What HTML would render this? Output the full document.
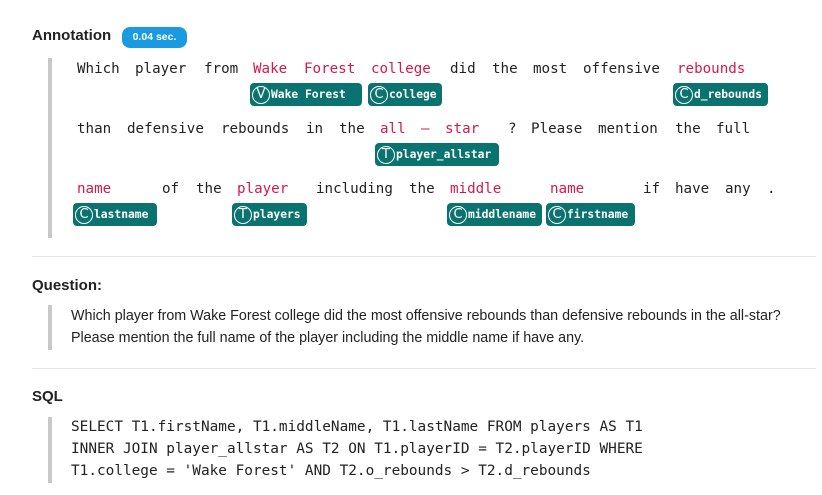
<!DOCTYPE html>
<html><head><meta charset="utf-8"><style>
body{margin:0;width:822px;height:495px;background:#fff;position:relative;overflow:hidden;font-family:"Liberation Sans",Arial,sans-serif;}
.a{position:absolute;}
.w{position:absolute;font-family:"DejaVu Sans Mono",monospace;font-size:14.2px;color:#222;line-height:20px;white-space:pre;}
.r{color:#d6194a;}
.t{position:absolute;height:23px;background:#0a7370;border-radius:4px;color:#fff;font-family:"DejaVu Sans Mono",monospace;font-weight:bold;font-size:11.3px;line-height:23px;padding-left:21px;box-sizing:border-box;white-space:pre;}
.t i{position:absolute;left:2px;top:2.5px;width:18px;height:18px;border:1.3px solid #fff;border-radius:50%;box-sizing:border-box;font-style:normal;font-family:"DejaVu Sans",sans-serif;font-weight:normal;font-size:13px;line-height:16px;text-align:center;}
.bar{position:absolute;left:48px;width:4px;background:#c8c8c8;}
.hr{position:absolute;left:32px;width:784px;height:1px;background:#e3e3e3;}
.h{position:absolute;font-weight:bold;font-size:15px;color:#222;}
.q{position:absolute;left:71px;font-size:14.3px;color:#222;line-height:22px;white-space:nowrap;}
.s{position:absolute;left:71px;font-family:"DejaVu Sans Mono",monospace;font-size:14.4px;color:#222;line-height:22px;white-space:pre;}
</style></head><body>
<div class="h" style="left:32px;top:27px">Annotation</div>
<div class="a" style="left:122px;top:27px;width:65px;height:21px;background:#1a9be0;border-radius:8px;color:#fff;font-size:10.5px;font-weight:bold;line-height:21px;text-align:center">0.04 sec.</div>
<div class="bar" style="top:58px;height:180px"></div>

<div class="w" style="left:77px;top:59px">Which</div>
<div class="w" style="left:135px;top:59px">player</div>
<div class="w" style="left:204px;top:59px">from</div>
<div class="w r" style="left:253px;top:59px">Wake</div>
<div class="w r" style="left:304px;top:59px">Forest</div>
<div class="w r" style="left:371px;top:59px">college</div>
<div class="w" style="left:450px;top:59px">did</div>
<div class="w" style="left:492px;top:59px">the</div>
<div class="w" style="left:533px;top:59px">most</div>
<div class="w" style="left:583px;top:59px">offensive</div>
<div class="w r" style="left:677px;top:59px">rebounds</div>
<div class="t" style="left:250px;top:83px;width:112px"><i>V</i>Wake Forest</div>
<div class="t" style="left:368px;top:83px;width:74px"><i>C</i>college</div>
<div class="t" style="left:673px;top:83px;width:95px"><i>C</i>d_rebounds</div>

<div class="w" style="left:77px;top:119px">than</div>
<div class="w" style="left:127px;top:119px">defensive</div>
<div class="w" style="left:221px;top:119px">rebounds</div>
<div class="w" style="left:306px;top:119px">in</div>
<div class="w" style="left:339px;top:119px">the</div>
<div class="w r" style="left:380px;top:119px">all</div>
<div class="w r" style="left:421px;top:119px">–</div>
<div class="w r" style="left:445px;top:119px">star</div>
<div class="w" style="left:508px;top:119px">?</div>
<div class="w" style="left:531px;top:119px">Please</div>
<div class="w" style="left:598px;top:119px">mention</div>
<div class="w" style="left:675px;top:119px">the</div>
<div class="w" style="left:716px;top:119px">full</div>
<div class="t" style="left:375px;top:143px;width:124px"><i>T</i>player_allstar</div>

<div class="w r" style="left:77px;top:179px">name</div>
<div class="w" style="left:162px;top:179px">of</div>
<div class="w" style="left:196px;top:179px">the</div>
<div class="w r" style="left:237px;top:179px">player</div>
<div class="w" style="left:316px;top:179px">including</div>
<div class="w" style="left:409px;top:179px">the</div>
<div class="w r" style="left:450px;top:179px">middle</div>
<div class="w r" style="left:550px;top:179px">name</div>
<div class="w" style="left:643px;top:179px">if</div>
<div class="w" style="left:675px;top:179px">have</div>
<div class="w" style="left:725px;top:179px">any</div>
<div class="w" style="left:767px;top:179px">.</div>
<div class="t" style="left:73px;top:203px;width:84px"><i>C</i>lastname</div>
<div class="t" style="left:232px;top:203px;width:75px"><i>T</i>players</div>
<div class="t" style="left:447px;top:203px;width:95px"><i>C</i>middlename</div>
<div class="t" style="left:546px;top:203px;width:89px"><i>C</i>firstname</div>

<div class="hr" style="top:256px"></div>
<div class="h" style="left:32px;top:277px">Question:</div>
<div class="bar" style="top:305px;height:45px"></div>
<div class="q" style="top:305px">Which player from Wake Forest college did the most offensive rebounds than defensive rebounds in the all-star?<br>Please mention the full name of the player including the middle name if have any.</div>

<div class="hr" style="top:368px"></div>
<div class="h" style="left:32px;top:388px">SQL</div>
<div class="bar" style="top:417px;height:66px"></div>
<div class="s" style="top:416px">SELECT T1.firstName, T1.middleName, T1.lastName FROM players AS T1
INNER JOIN player_allstar AS T2 ON T1.playerID = T2.playerID WHERE
T1.college = 'Wake Forest' AND T2.o_rebounds &gt; T2.d_rebounds</div>
</body></html>
